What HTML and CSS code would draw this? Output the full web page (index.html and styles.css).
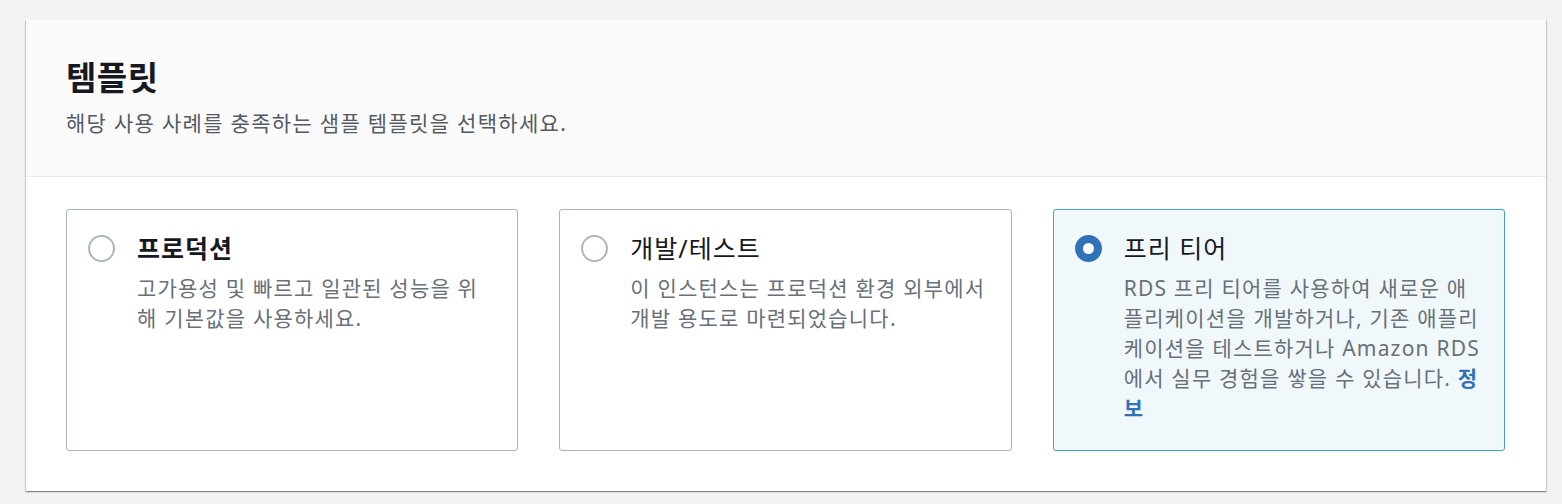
FILE: index.html
```html
<!DOCTYPE html>
<html lang="ko">
<head>
<meta charset="utf-8">
<title>템플릿</title>
<link rel="stylesheet" href="styles.css">
</head>
<body>
<div class="page">
  <section class="container">
    <header class="container-header">
      <h2 class="title">템플릿</h2>
      <p class="subtitle">해당 사용 사례를 충족하는 샘플 템플릿을 선택하세요.</p>
    </header>
    <div class="container-body">
      <div class="tiles">
        <label class="tile">
          <span class="radio"></span>
          <span class="tile-text">
            <span class="tile-title tile-title-strong">프로덕션</span>
            <span class="tile-desc">고가용성 및 빠르고 일관된 성능을 위<br>해 기본값을 사용하세요.</span>
          </span>
        </label>
        <label class="tile">
          <span class="radio"></span>
          <span class="tile-text">
            <span class="tile-title">개발/테스트</span>
            <span class="tile-desc">이 인스턴스는 프로덕션 환경 외부에서<br>개발 용도로 마련되었습니다.</span>
          </span>
        </label>
        <label class="tile tile-selected">
          <span class="radio radio-checked"></span>
          <span class="tile-text">
            <span class="tile-title">프리 티어</span>
            <span class="tile-desc">RDS 프리 티어를 사용하여 새로운 애<br>플리케이션을 개발하거나, 기존 애플리<br>케이션을 테스트하거나 Amazon RDS<br>에서 실무 경험을 쌓을 수 있습니다. <a class="info-link" href="#">정<br>보</a></span>
          </span>
        </label>
      </div>
    </div>
  </section>
</div>
</body>
</html>
```

FILE: styles.css
```css
html, body {
  margin: 0;
  padding: 0;
  background: #f2f3f3;
}

body {
  font-family: "Noto Sans", "Noto Sans CJK KR", sans-serif;
  color: #16191f;
}

.page {
  padding: 20px 16px 12px 26px;
}

.container {
  background: #ffffff;
  box-shadow: 0 1px 1px 0 rgba(0, 28, 36, 0.3), 1px 1px 1px 0 rgba(0, 28, 36, 0.15), -1px 1px 1px 0 rgba(0, 28, 36, 0.15);
}

.container-header {
  background: #fafafa;
  border-bottom: 1px solid #eaeded;
  height: 157px;
  box-sizing: border-box;
  padding: 36px 40px 0;
}

.title {
  margin: 0;
  font-size: 33px;
  line-height: 44px;
  font-weight: 700;
  letter-spacing: 0.5px;
  color: #16191f;
}

.subtitle {
  margin: 8px 0 0;
  font-size: 21px;
  line-height: 30px;
  letter-spacing: 1.3px;
  color: #545b64;
}

.container-body {
  padding: 32px 41px 40px 40px;
}

.tiles {
  display: grid;
  grid-template-columns: repeat(3, 1fr);
  column-gap: 41px;
}

.tile {
  display: flex;
  align-items: flex-start;
  border: 1px solid #aab7b8;
  border-radius: 3px;
  background: #ffffff;
  padding: 22px 21px 27px 21px;
  cursor: pointer;
}

.tile-selected {
  border-color: #44a1cf;
  background: #f1f8fc;
}

.radio {
  flex: none;
  width: 27px;
  height: 27px;
  box-sizing: border-box;
  border: 2px solid #aab7b8;
  border-radius: 50%;
  background: #ffffff;
  margin-top: 3px;
  margin-right: 22px;
}

.radio-checked {
  border: 8px solid #2f72b8;
}

.tile-text {
  display: flex;
  flex-direction: column;
}

.tile-title {
  font-size: 25px;
  line-height: 33px;
  letter-spacing: 1px;
  color: #16191f;
}

.tile-title-strong {
  font-weight: 600;
}

.tile-desc {
  margin-top: 8px;
  font-size: 21px;
  line-height: 30px;
  letter-spacing: 1.2px;
  color: #687078;
  white-space: nowrap;
}

.info-link {
  color: #2f72b8;
  font-weight: 700;
  text-decoration: none;
}
```
